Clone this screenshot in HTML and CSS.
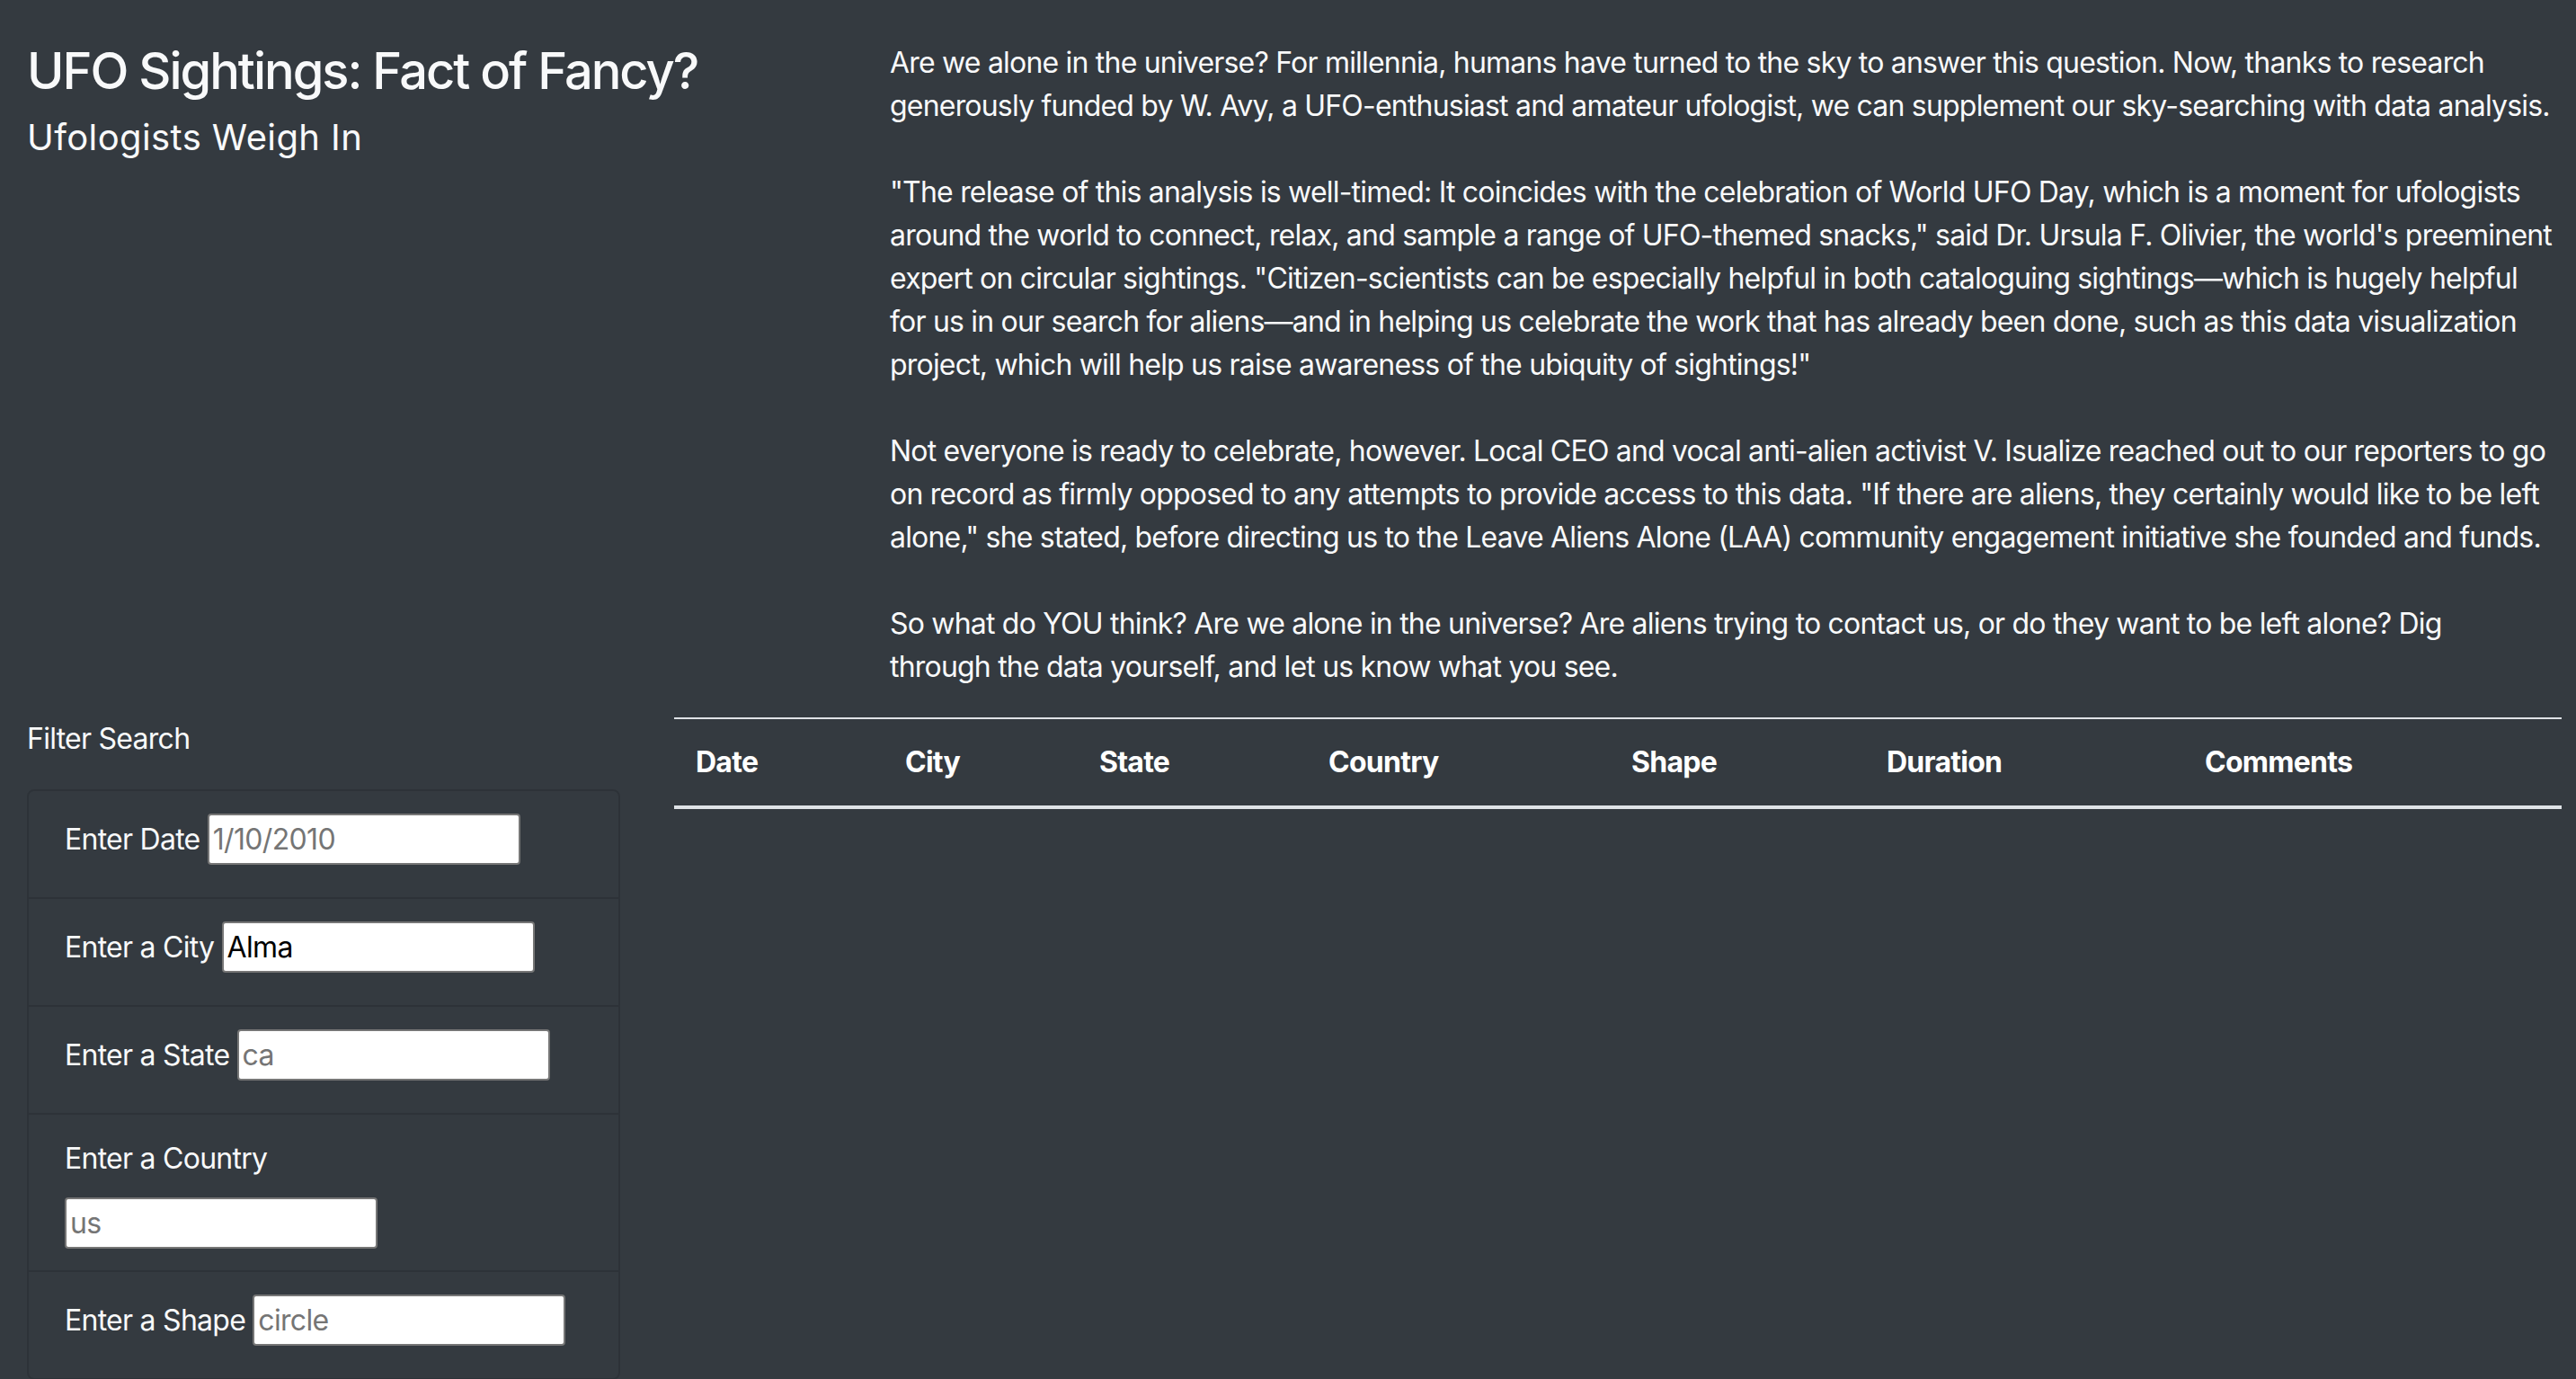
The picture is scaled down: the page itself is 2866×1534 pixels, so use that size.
FILE: index.html
```html
<!DOCTYPE html>
<html lang="en">
<head>
<meta charset="utf-8">
<title>UFO Sightings: Fact of Fancy?</title>
<link rel="stylesheet" href="styles.css">
</head>
<body>
<div class="page">
  <div class="intro">
    <div class="heading">
      <h1 class="title">UFO Sightings: Fact of Fancy?</h1>
      <h2 class="subtitle">Ufologists Weigh In</h2>
    </div>
    <div class="article">
      <p>Are we alone in the universe? For millennia, humans have turned to the sky to answer this question. Now, thanks to research<br>generously funded by W. Avy, a UFO-enthusiast and amateur ufologist, we can supplement our sky-searching with data analysis.</p>
      <p>"The release of this analysis is well-timed: It coincides with the celebration of World UFO Day, which is a moment for ufologists<br>around the world to connect, relax, and sample a range of UFO-themed snacks," said Dr. Ursula F. Olivier, the world's preeminent<br>expert on circular sightings. "Citizen-scientists can be especially helpful in both cataloguing sightings—which is hugely helpful<br>for us in our search for aliens—and in helping us celebrate the work that has already been done, such as this data visualization<br>project, which will help us raise awareness of the ubiquity of sightings!"</p>
      <p>Not everyone is ready to celebrate, however. Local CEO and vocal anti-alien activist V. Isualize reached out to our reporters to go<br>on record as firmly opposed to any attempts to provide access to this data. "If there are aliens, they certainly would like to be left<br>alone," she stated, before directing us to the Leave Aliens Alone (LAA) community engagement initiative she founded and funds.</p>
      <p class="last">So what do YOU think? Are we alone in the universe? Are aliens trying to contact us, or do they want to be left alone? Dig<br>through the data yourself, and let us know what you see.</p>
    </div>
  </div>
  <div class="data">
    <aside class="filters">
      <p class="filter-title">Filter Search</p>
      <ul class="filter-card">
        <li class="filter-item"><label for="date">Enter Date</label> <input id="date" class="field" type="text" placeholder="1/10/2010"></li>
        <li class="filter-item"><label for="city">Enter a City</label> <input id="city" class="field" type="text" value="Alma"></li>
        <li class="filter-item"><label for="state">Enter a State</label> <input id="state" class="field" type="text" placeholder="ca"></li>
        <li class="filter-item"><label for="country" class="label-block">Enter a Country</label> <input id="country" class="field" type="text" placeholder="us"></li>
        <li class="filter-item"><label for="shape">Enter a Shape</label> <input id="shape" class="field" type="text" placeholder="circle"></li>
      </ul>
    </aside>
    <div class="results">
      <table class="sightings">
        <thead>
          <tr>
            <th class="c-date">Date</th>
            <th class="c-city">City</th>
            <th class="c-state">State</th>
            <th class="c-country">Country</th>
            <th class="c-shape">Shape</th>
            <th class="c-duration">Duration</th>
            <th class="c-comments">Comments</th>
          </tr>
        </thead>
        <tbody></tbody>
      </table>
    </div>
  </div>
</div>
</body>
</html>
```

FILE: styles.css
```css
html, body {
  margin: 0;
  padding: 0;
  background: #343a40;
  overflow: hidden;
}

body {
  font-family: Inter, "Noto Sans", "Liberation Sans", sans-serif;
  font-size: 32px;
  line-height: 48px;
  letter-spacing: -0.023em;
  color: #f8f9fa;
}

.page {
  padding: 46px 16px 0 30px;
}

.intro {
  display: grid;
  grid-template-columns: 900px 1fr;
  column-gap: 60px;
}

.title {
  margin: 0 0 16px;
  font-size: 56px;
  line-height: 1.2;
  font-weight: 500;
  letter-spacing: -0.036em;
}

.subtitle {
  margin: 0;
  font-size: 40px;
  line-height: 1.2;
  font-weight: 400;
  letter-spacing: 0.01em;
}

.article p {
  margin: 0 0 48px;
  white-space: nowrap;
  letter-spacing: -0.025em;
}

.article p.last {
  margin-bottom: 32px;
}

.data {
  display: grid;
  grid-template-columns: 660px 1fr;
  column-gap: 60px;
}

.filter-title {
  margin: 0 0 32px;
}

.filter-card {
  list-style: none;
  margin: 0;
  padding: 0;
  border: 2px solid rgba(0, 0, 0, 0.125);
  border-radius: 8px;
}

.filter-item {
  padding: 24.5px 40px;
  border-bottom: 2px solid rgba(0, 0, 0, 0.125);
}

.filter-item:last-child {
  border-bottom: 0;
}

.filter-item label {
  display: inline-block;
  margin-bottom: 16px;
}

.filter-item label.label-block {
  display: block;
  margin-bottom: 19px;
}

.field {
  box-sizing: border-box;
  width: 348px;
  height: 57px;
  font-family: inherit;
  font-size: 32px;
  line-height: 48px;
  letter-spacing: -0.021em;
  padding: 2px 4px;
  margin: 0;
  border: 2px solid #767676;
  border-radius: 4px;
  background: #fff;
  color: #000;
}

.field::placeholder {
  color: #757575;
}

.sightings {
  width: 100%;
  border-collapse: collapse;
  color: #fff;
}

.sightings th {
  text-align: left;
  font-weight: 700;
  padding: 24px;
  vertical-align: bottom;
  border-top: 2px solid #dee2e6;
  border-bottom: 4px solid #dee2e6;
}

.c-date { width: 185px; }
.c-city { width: 168px; }
.c-state { width: 207px; }
.c-country { width: 289px; }
.c-shape { width: 236px; }
.c-duration { width: 306px; }
.c-comments { width: auto; }
```
